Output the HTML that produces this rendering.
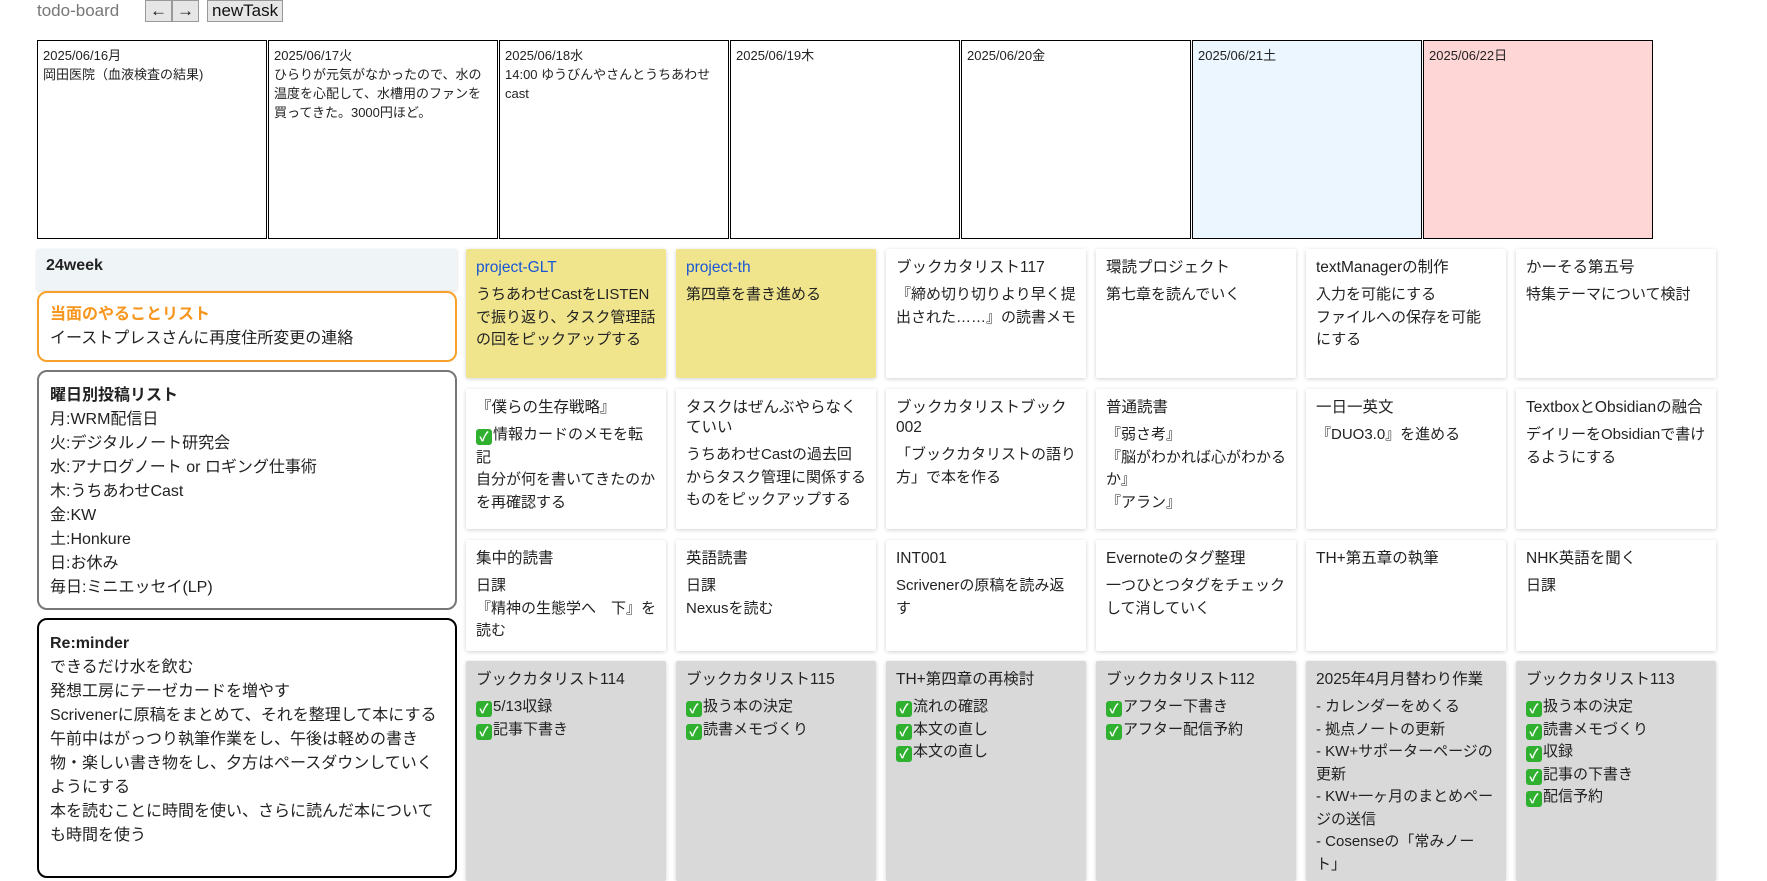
<!DOCTYPE html>
<html><head><meta charset="utf-8">
<style>
*{box-sizing:border-box;margin:0;padding:0}
body{width:1767px;height:847px;overflow:hidden;background:#fff;font-family:"Liberation Sans","Noto Sans CJK JP",sans-serif;color:#222;position:relative}
.hdr{position:absolute;left:37px;top:1px;font-size:17px;color:#777}
.btn{position:absolute;top:0;height:22px;border:1px solid #999;background:#e6e6e6;font-size:17px;line-height:20px;padding:0 4px;color:#111}
.day{position:absolute;top:40px;width:230px;height:199px;border:1px solid #000;font-size:13px;line-height:19px;padding:5px 5px}
.left{position:absolute;left:37px;width:420px}
.card{position:absolute;width:200px;padding:9px 10px;font-size:15px;line-height:22.5px;background:#fff;box-shadow:0 1px 4px rgba(0,0,0,.18);border-radius:2px}
.card .t{font-size:15.5px;margin-bottom:6px;line-height:20px}
.y{background:#f0e58c}.y .t{color:#1a56d6}
.g{background:#d9d9d9}
.ck{display:inline-block;width:16px;height:16px;background:#2fb12f;border-radius:3px;color:#fff;font-size:13px;line-height:16px;text-align:center;vertical-align:-2px;margin-right:1px;font-weight:bold}
</style></head><body>
<div class="hdr">todo-board</div>
<div class="btn" style="left:145px">←</div><div class="btn" style="left:172px">→</div>
<div class="btn" style="left:207px">newTask</div>

<div class="day" style="left:37px">2025/06/16月<br>岡田医院（血液検査の結果)</div>
<div class="day" style="left:268px">2025/06/17火<br>ひらりが元気がなかったので、水の温度を心配して、水槽用のファンを買ってきた。3000円ほど。</div>
<div class="day" style="left:499px">2025/06/18水<br>14:00 ゆうびんやさんとうちあわせ cast</div>
<div class="day" style="left:730px">2025/06/19木</div>
<div class="day" style="left:961px">2025/06/20金</div>
<div class="day" style="left:1192px;background:#ebf6fe">2025/06/21土</div>
<div class="day" style="left:1423px;background:#ffd6d6">2025/06/22日</div>

<div class="left" style="top:249px;height:41px;background:#eff4f7;box-shadow:0 1px 3px rgba(0,0,0,.15);font-weight:bold;font-size:16px;padding:8px 9px">24week</div>
<div class="left" style="top:291px;height:71px;border:2px solid #f7a02a;border-radius:10px;padding:10px 11px;font-size:16px;line-height:24px"><b style="color:#f7961e">当面のやることリスト</b><br>イーストプレスさんに再度住所変更の連絡</div>
<div class="left" style="top:370px;height:240px;border:2px solid #777;border-radius:10px;padding:12px 11px;font-size:16px;line-height:24px"><b>曜日別投稿リスト</b><br>月:WRM配信日<br>火:デジタルノート研究会<br>水:アナログノート or ロギング仕事術<br>木:うちあわせCast<br>金:KW<br>土:Honkure<br>日:お休み<br>毎日:ミニエッセイ(LP)</div>
<div class="left" style="top:618px;height:260px;border:2px solid #000;border-radius:10px;padding:12px 11px;font-size:16px;line-height:24px"><b>Re:minder</b><br>できるだけ水を飲む<br>発想工房にテーゼカードを増やす<br>Scrivenerに原稿をまとめて、それを整理して本にする<br>午前中はがっつり執筆作業をし、午後は軽めの書き物・楽しい書き物をし、夕方はペースダウンしていくようにする<br>本を読むことに時間を使い、さらに読んだ本についても時間を使う</div>

<!-- row1 -->
<div class="card y" style="left:466px;top:249px;height:129px"><div class="t">project-GLT</div>うちあわせCastをLISTENで振り返り、タスク管理話の回をピックアップする</div>
<div class="card y" style="left:676px;top:249px;height:129px"><div class="t">project-th</div>第四章を書き進める</div>
<div class="card" style="left:886px;top:249px;height:129px"><div class="t">ブックカタリスト117</div>『締め切り切りより早く提出された……』の読書メモ</div>
<div class="card" style="left:1096px;top:249px;height:129px"><div class="t">環読プロジェクト</div>第七章を読んでいく</div>
<div class="card" style="left:1306px;top:249px;height:129px"><div class="t">textManagerの制作</div>入力を可能にする<br>ファイルへの保存を可能にする</div>
<div class="card" style="left:1516px;top:249px;height:129px"><div class="t">かーそる第五号</div>特集テーマについて検討</div>
<!-- row2 -->
<div class="card" style="left:466px;top:389px;height:140px"><div class="t">『僕らの生存戦略』</div><span class="ck">✓</span>情報カードのメモを転記<br>自分が何を書いてきたのかを再確認する</div>
<div class="card" style="left:676px;top:389px;height:140px"><div class="t">タスクはぜんぶやらなくていい</div>うちあわせCastの過去回からタスク管理に関係するものをピックアップする</div>
<div class="card" style="left:886px;top:389px;height:140px"><div class="t">ブックカタリストブック002</div>「ブックカタリストの語り方」で本を作る</div>
<div class="card" style="left:1096px;top:389px;height:140px"><div class="t">普通読書</div>『弱さ考』<br>『脳がわかれば心がわかるか』<br>『アラン』</div>
<div class="card" style="left:1306px;top:389px;height:140px"><div class="t">一日一英文</div>『DUO3.0』を進める</div>
<div class="card" style="left:1516px;top:389px;height:140px"><div class="t">TextboxとObsidianの融合</div>デイリーをObsidianで書けるようにする</div>
<!-- row3 -->
<div class="card" style="left:466px;top:540px;height:111px"><div class="t">集中的読書</div>日課<br>『精神の生態学へ　下』を読む</div>
<div class="card" style="left:676px;top:540px;height:111px"><div class="t">英語読書</div>日課<br>Nexusを読む</div>
<div class="card" style="left:886px;top:540px;height:111px"><div class="t">INT001</div>Scrivenerの原稿を読み返す</div>
<div class="card" style="left:1096px;top:540px;height:111px"><div class="t">Evernoteのタグ整理</div>一つひとつタグをチェックして消していく</div>
<div class="card" style="left:1306px;top:540px;height:111px"><div class="t">TH+第五章の執筆</div></div>
<div class="card" style="left:1516px;top:540px;height:111px"><div class="t">NHK英語を聞く</div>日課</div>
<!-- row4 -->
<div class="card g" style="left:466px;top:661px;height:220px"><div class="t">ブックカタリスト114</div><span class="ck">✓</span>5/13収録<br><span class="ck">✓</span>記事下書き</div>
<div class="card g" style="left:676px;top:661px;height:220px"><div class="t">ブックカタリスト115</div><span class="ck">✓</span>扱う本の決定<br><span class="ck">✓</span>読書メモづくり</div>
<div class="card g" style="left:886px;top:661px;height:220px"><div class="t">TH+第四章の再検討</div><span class="ck">✓</span>流れの確認<br><span class="ck">✓</span>本文の直し<br><span class="ck">✓</span>本文の直し</div>
<div class="card g" style="left:1096px;top:661px;height:220px"><div class="t">ブックカタリスト112</div><span class="ck">✓</span>アフター下書き<br><span class="ck">✓</span>アフター配信予約</div>
<div class="card g" style="left:1306px;top:661px;height:220px"><div class="t">2025年4月月替わり作業</div>- カレンダーをめくる<br>- 拠点ノートの更新<br>- KW+サポーターページの更新<br>- KW+一ヶ月のまとめページの送信<br>- Cosenseの「常みノート」</div>
<div class="card g" style="left:1516px;top:661px;height:220px"><div class="t">ブックカタリスト113</div><span class="ck">✓</span>扱う本の決定<br><span class="ck">✓</span>読書メモづくり<br><span class="ck">✓</span>収録<br><span class="ck">✓</span>記事の下書き<br><span class="ck">✓</span>配信予約</div>
</body></html>
